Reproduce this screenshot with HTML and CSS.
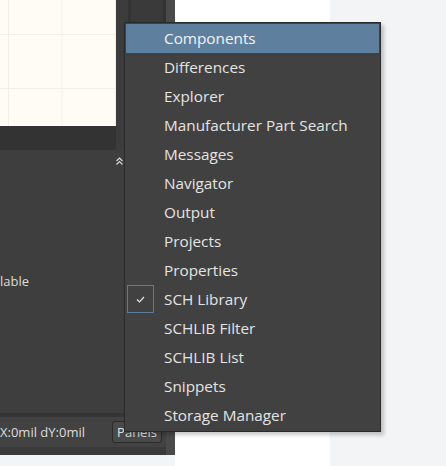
FILE: index.html
```html
<!DOCTYPE html>
<html>
<head>
<meta charset="utf-8">
<link rel="stylesheet" href="styles.css">
</head>
<body>
<div class="screen">
  <div class="app">
    <div class="app-main">
      <div class="top-row">
        <div class="canvas-col">
          <div class="canvas"></div>
          <div class="canvas-foot"></div>
        </div>
        <div class="side-col">
          <div class="side-gap"></div>
          <div class="side-line"></div>
          <div class="side-panel"></div>
          <div class="side-line"></div>
        </div>
      </div>
      <div class="work">
        <div class="chevron-row">
          <svg class="chev" width="7" height="8" viewBox="0 0 7 8"><path d="M0.5 4 L3.5 1 L6.5 4 M0.5 7.5 L3.5 4.5 L6.5 7.5" fill="none" stroke="#d8d8d8" stroke-width="1.2"/></svg>
        </div>
        <div class="avail">lable</div>
      </div>
      <div class="status-sep"></div>
      <div class="status">
        <span class="coords">X:0mil dY:0mil</span>
        <span class="panels-btn">Panels</span>
      </div>
      <div class="status-foot"></div>
    </div>
    <div class="app-strip"></div>
  </div>
  <div class="white-area"></div>
  <div class="grey-area"></div>

  <div class="menu">
    <div class="item active">Components</div>
    <div class="item">Differences</div>
    <div class="item">Explorer</div>
    <div class="item">Manufacturer Part Search</div>
    <div class="item">Messages</div>
    <div class="item">Navigator</div>
    <div class="item">Output</div>
    <div class="item">Projects</div>
    <div class="item">Properties</div>
    <div class="item checked"><span class="check"><svg width="9" height="7" viewBox="0 0 9 7"><path d="M1 3.5 L3.5 6 L8 1" fill="none" stroke="#e6e6e6" stroke-width="1.2"/></svg></span>SCH Library</div>
    <div class="item">SCHLIB Filter</div>
    <div class="item">SCHLIB List</div>
    <div class="item">Snippets</div>
    <div class="item">Storage Manager</div>
  </div>
</div>
</body>
</html>
```
FILE: styles.css
```css
html, body {
  margin: 0;
  padding: 0;
}
body {
  width: 446px;
  height: 466px;
  overflow: hidden;
  font-family: "Open Sans", "Noto Sans", sans-serif;
  background: #f3f4f6;
}
.screen {
  position: relative;
  display: flex;
  height: 466px;
}
.app {
  width: 175px;
  height: 455px;
  display: flex;
  flex: none;
}
.app-main {
  width: 166px;
  display: flex;
  flex-direction: column;
  background: #3e3e3e;
}
.app-strip {
  width: 9px;
  background: #4a4a4a;
}
.top-row {
  display: flex;
  height: 150px;
}
.canvas-col {
  width: 116px;
  display: flex;
  flex-direction: column;
}
.canvas {
  height: 126px;
  background-color: #fffcf6;
  background-image:
    linear-gradient(to right, #f1efea 1px, transparent 1px),
    linear-gradient(to bottom, #f1efea 1px, transparent 1px);
  background-size: 53.5px 54px;
  background-position: 8px 34px;
}
.canvas-foot {
  height: 24px;
  background: #333333;
}
.side-col {
  width: 50px;
  display: flex;
}
.side-gap {
  width: 12px;
  background: #3c3c3c;
}
.side-line {
  width: 3px;
  background: #333333;
}
.side-panel {
  width: 32px;
  background: #3a3a3a;
}
.work {
  flex: 1;
  display: flex;
  flex-direction: column;
}
.chevron-row {
  display: flex;
  justify-content: flex-end;
  padding: 7px 43px 0 0;
}
.chev {
  display: block;
}
.avail {
  margin-top: 107px;
  font-size: 13px;
  color: #dcdcdc;
  line-height: 18px;
}
.status-sep {
  height: 4px;
  background: #353535;
}
.status {
  height: 30px;
  background: #424242;
  display: flex;
  align-items: center;
  justify-content: space-between;
  padding-right: 4px;
}
.coords {
  font-size: 13px;
  color: #dcdcdc;
}
.panels-btn {
  box-sizing: border-box;
  width: 50px;
  height: 22px;
  border: 1px solid #2a2a2a;
  border-radius: 3px;
  background: #4a4a4a;
  color: #e0e0e0;
  font-size: 13px;
  line-height: 20px;
  text-align: center;
}
.status-foot {
  height: 8px;
  background: #3a3a3a;
}
.white-area {
  width: 155px;
  background: #ffffff;
  flex: none;
}
.grey-area {
  flex: 1;
  background: #f3f4f6;
}
.menu {
  position: absolute;
  left: 124px;
  top: 22px;
  width: 255px;
  padding: 1px 0;
  background: #414141;
  border: 1px solid #2b2b2b;
  box-shadow: 3px 3px 4px rgba(0, 0, 0, 0.22);
}
.item {
  position: relative;
  height: 29px;
  line-height: 29px;
  padding-left: 38px;
  margin: 0 1px;
  font-size: 15.3px;
  color: #e4e4e4;
  white-space: nowrap;
}
.item.active {
  background: #5f7f9f;
  color: #f4f4f4;
}
.check {
  position: absolute;
  left: 1px;
  top: 0;
  box-sizing: border-box;
  width: 27px;
  height: 28px;
  border: 1px solid #5b7b9a;
  display: flex;
  align-items: center;
  justify-content: center;
}
.check svg {
  display: block;
}
```
